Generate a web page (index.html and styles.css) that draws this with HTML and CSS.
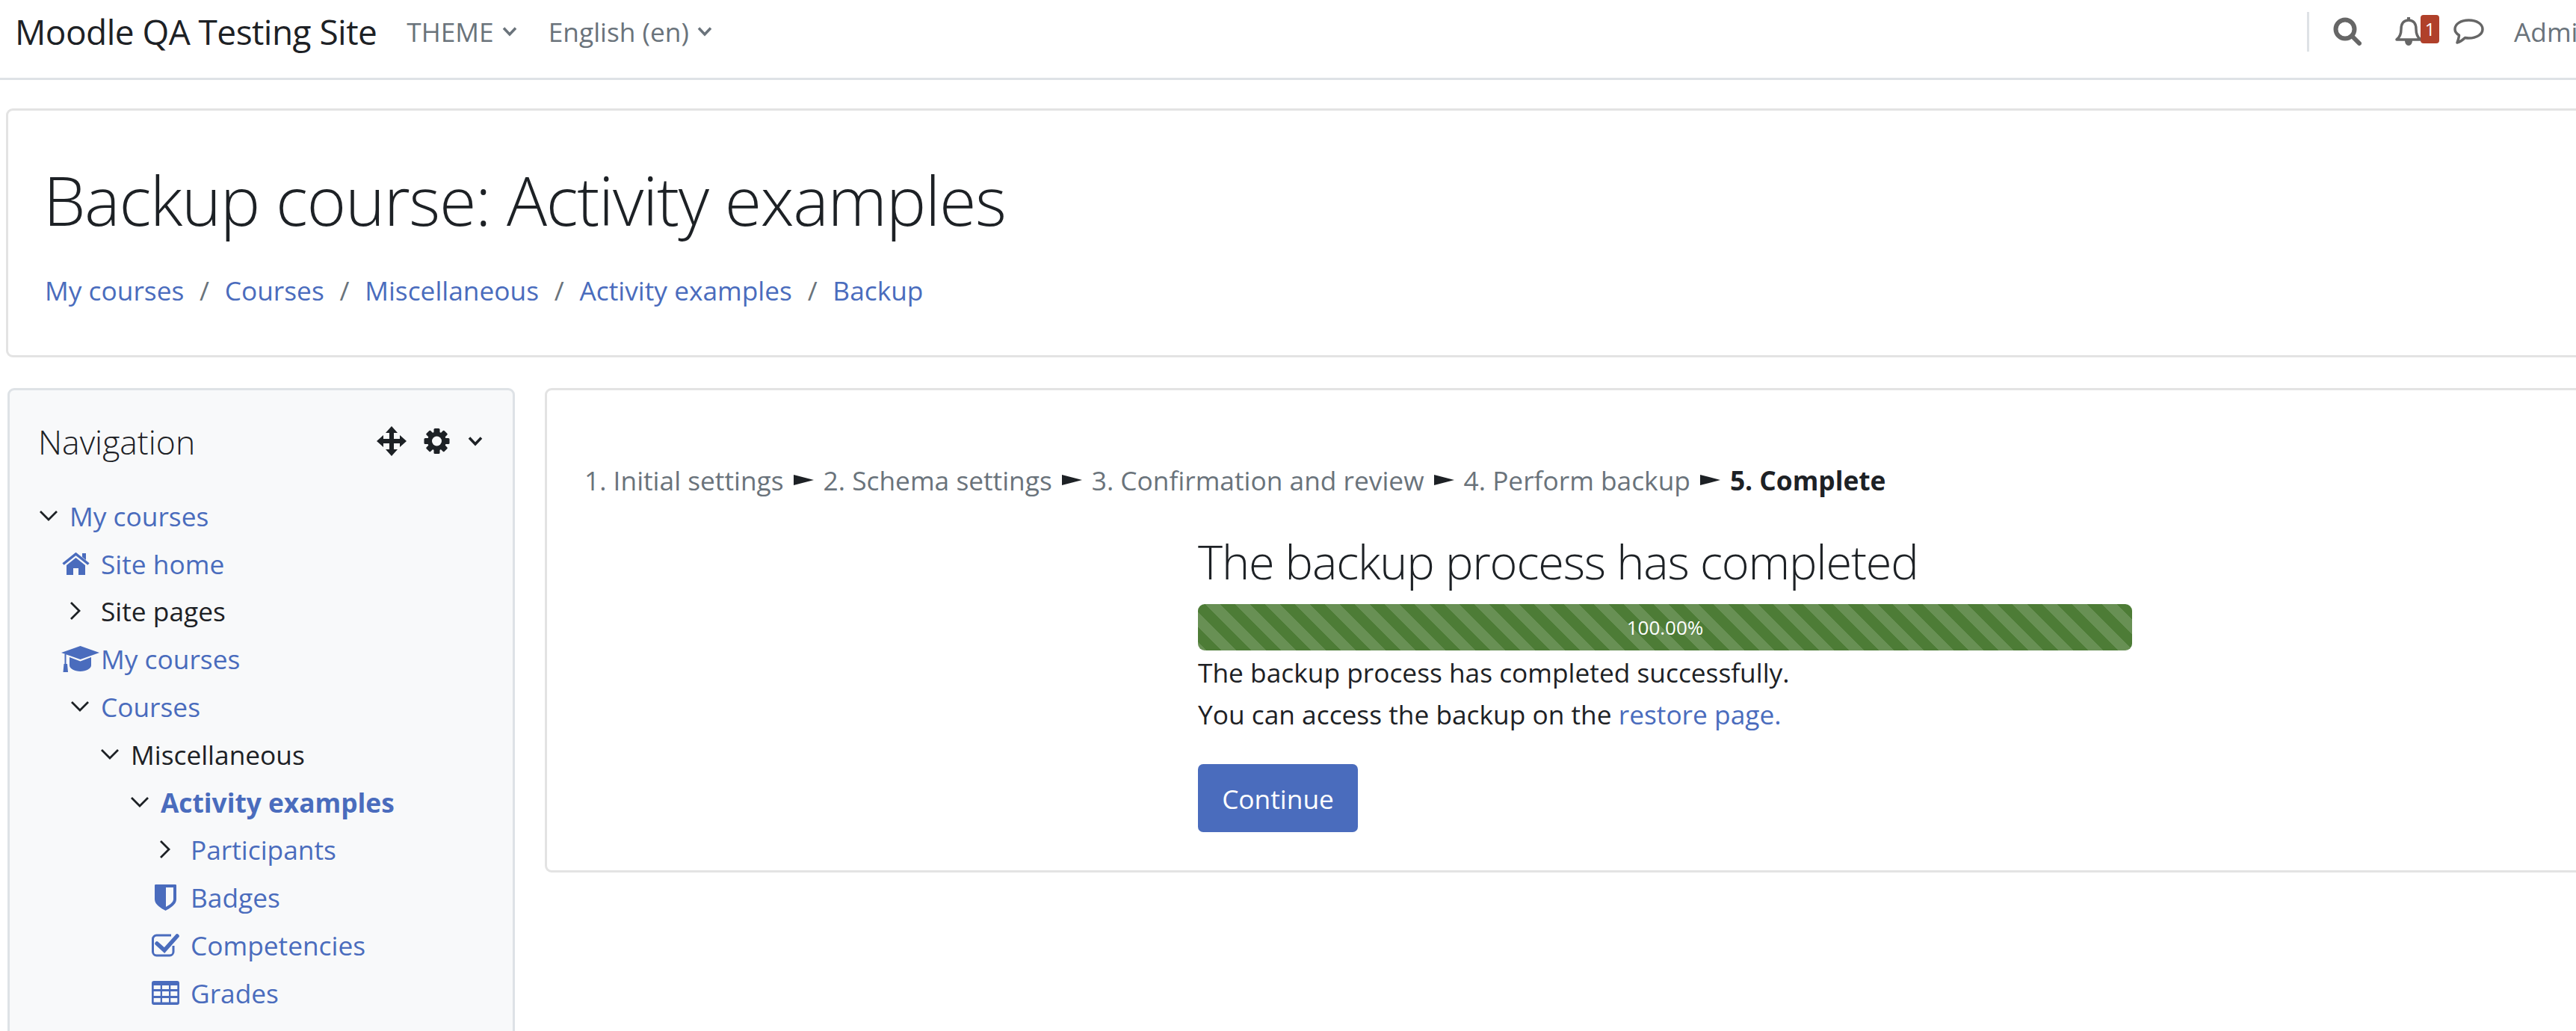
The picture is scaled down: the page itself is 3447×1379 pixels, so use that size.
FILE: index.html
```html
<!DOCTYPE html>
<html lang="en">
<head>
<meta charset="utf-8">
<title>Backup course: Activity examples</title>
<link rel="stylesheet" href="styles.css">
</head>
<body>
<header class="navbar">
  <a class="brand">Moodle QA Testing Site</a>
  <a class="menu">THEME<svg class="caret" viewBox="0 0 20 14"><path d="M2 2.500l8 8.500 8-8.500"/></svg></a>
  <a class="menu">English ‎(en)‎<svg class="caret" viewBox="0 0 20 14"><path d="M2 2.500l8 8.500 8-8.500"/></svg></a>
  <div class="nav-right">
    <span class="divider"></span>
    <svg class="ic-search" viewBox="0 0 38 38"><circle cx="16" cy="16" r="12.500"/><path d="m25 25 10 10"/></svg>
    <span class="bell-wrap">
      <svg class="ic-bell" viewBox="0 0 36 40"><path class="line" d="M2 31c4-3 6-7 6-14C8 9 12 5 18 5s10 4 10 12c0 7 2 11 6 14z"/><path class="solid" d="M16 1h4v5h-4zM13 32h10c0 4-2 7-5 7s-5-3-5-7z"/></svg>
      <span class="badge">1</span>
    </span>
    <svg class="ic-chat" viewBox="0 0 41 36"><path d="M20.500 3C10 3 2 8 2 15c0 3.500 2 6 5.500 8 0 3-1 6-2.500 10 4-1 8-4 10.500-6.500 1.500.3 3.500.5 5 .5C31 27 39 22 39 15S31 3 20.500 3z"/></svg>
    <span class="user">Admin User</span>
  </div>
</header>

<section class="page-header">
  <h1>Backup course: Activity examples</h1>
  <nav class="crumbs">
    <a>My courses</a><i>/</i><a>Courses</a><i>/</i><a>Miscellaneous</a><i>/</i><a>Activity examples</a><i>/</i><a>Backup</a>
  </nav>
</section>

<div class="columns">
  <aside class="block">
    <div class="block-head">
      <h2>Navigation</h2>
      <svg class="ic-move" viewBox="0 0 40 40"><path d="M20 0l8 9h-5v8h8v-5l9 8-9 8v-5h-8v8h5l-8 9-8-9h5v-8H9v5l-9-8 9-8v5h8V9h-5z"/></svg>
      <svg class="ic-gear" viewBox="0 0 35 34">
        <g class="teeth">
          <rect x="13.500" y="0" width="8" height="34" rx="1.500"/>
          <rect x="13.500" y="0" width="8" height="34" rx="1.500" transform="rotate(45 17.500 17)"/>
          <rect x="13.500" y="0" width="8" height="34" rx="1.500" transform="rotate(90 17.500 17)"/>
          <rect x="13.500" y="0" width="8" height="34" rx="1.500" transform="rotate(135 17.500 17)"/>
          <circle cx="17.500" cy="17" r="12.500"/>
        </g>
        <circle class="hole" cx="17.500" cy="17" r="6.500"/>
      </svg>
      <svg class="caret dark" viewBox="0 0 20 14"><path d="M2 2.500l8 8.500 8-8.500"/></svg>
    </div>
    <ul class="tree">
      <li class="lv0"><span class="slot"><svg class="tw" viewBox="0 0 24 24"><path d="M1 6l11 11L23 6"/></svg></span><a>My courses</a></li>
      <li class="lv1"><span class="slot"><svg class="fi home" viewBox="0 0 37 30"><path class="roof" d="M1.500 15.500 18.500 2l17 13.500"/><path d="M27 1h5v9l-5-4zM18.500 7 31 17v13h-9v-9h-7v9H6V17z"/></svg></span><a>Site home</a></li>
      <li class="lv1"><span class="slot"><svg class="tw right" viewBox="0 0 24 24"><path d="M1 1l11 11L1 23"/></svg></span><span>Site pages</span></li>
      <li class="lv1"><span class="slot"><svg class="fi cap" viewBox="0 0 51 35"><path d="M25.500 0 51 9l-25.500 9L0 9zM11 15l14.500 5.500L40 15v11c0 4-6.500 8-14.500 8S11 30 11 26zM4.500 11h2v13h1.500l1 11H2.500l1-11h1z"/></svg></span><a>My courses</a></li>
      <li class="lv1"><span class="slot"><svg class="tw" viewBox="0 0 24 24"><path d="M1 6l11 11L23 6"/></svg></span><a>Courses</a></li>
      <li class="lv2"><span class="slot"><svg class="tw" viewBox="0 0 24 24"><path d="M1 6l11 11L23 6"/></svg></span><span>Miscellaneous</span></li>
      <li class="lv3"><span class="slot"><svg class="tw" viewBox="0 0 24 24"><path d="M1 6l11 11L23 6"/></svg></span><a class="strong">Activity examples</a></li>
      <li class="lv4"><span class="slot"><svg class="tw right" viewBox="0 0 24 24"><path d="M1 1l11 11L1 23"/></svg></span><a>Participants</a></li>
      <li class="lv4"><span class="slot"><svg class="fi shield" viewBox="0 0 29 35"><path fill-rule="evenodd" d="M1.500 0h26c1 0 1.500.5 1.500 1.500V20c0 7-9 12-14.500 15C9 32 0 27 0 20V1.500C0 .5.500 0 1.500 0zM15 4v26c4-2.500 10-5.500 10-10.500V4z"/></svg></span><a>Badges</a></li>
      <li class="lv4"><span class="slot"><svg class="fi check" viewBox="0 0 37 32"><path class="ln" d="M29 17v8a5 5 0 0 1-5 5H6.500a5 5 0 0 1-5-5V8a5 5 0 0 1 5-5H26"/><path class="ln thick" d="M7 14l10 9L34 4"/></svg></span><a>Competencies</a></li>
      <li class="lv4"><span class="slot"><svg class="fi grid" viewBox="0 0 37 32"><path fill-rule="evenodd" d="M3 0h31a3 3 0 0 1 3 3v26a3 3 0 0 1-3 3H3a3 3 0 0 1-3-3V3a3 3 0 0 1 3-3zM2.700 6v5h9V6zM14 6v5h9V6zM25.300 6v5h9V6zM2.700 14v6h9v-6zM14 14v6h9v-6zM25.300 14v6h9v-6zM2.700 23v5.500h9V23zM14 23v5.500h9V23zM25.300 23v5.500h9V23z"/></svg></span><a>Grades</a></li>
      <li class="lv4"><span class="slot"><svg class="tw" viewBox="0 0 24 24"><path d="M1 6l11 11L23 6"/></svg></span><a>General</a></li>
    </ul>
  </aside>

  <main class="content">
    <div class="steps"><span>1. Initial settings</span><svg class="sep" viewBox="0 0 27 14"><path d="M0 0l27 7L0 14z"/></svg><span>2. Schema settings</span><svg class="sep" viewBox="0 0 27 14"><path d="M0 0l27 7L0 14z"/></svg><span>3. Confirmation and review</span><svg class="sep" viewBox="0 0 27 14"><path d="M0 0l27 7L0 14z"/></svg><span>4. Perform backup</span><svg class="sep" viewBox="0 0 27 14"><path d="M0 0l27 7L0 14z"/></svg><b class="cur">5. Complete</b></div>
    <div class="result">
      <h3>The backup process has completed</h3>
      <div class="progress">100.00%</div>
      <p>The backup process has completed successfully.</p>
      <p>You can access the backup on the <a>restore page.</a></p>
      <button class="btn">Continue</button>
    </div>
  </main>
</div>
</body>
</html>
```

FILE: styles.css
```css
* { box-sizing: border-box; }
html, body { height: 100%; overflow: hidden; }
body {
  margin: 0;
  background: #fff;
  color: #1d2125;
  font-family: "Open Sans", "Noto Sans", sans-serif;
  font-size: 35.3px;
}
a { color: #4a6cbd; }

.navbar {
  display: flex;
  align-items: center;
  height: 107px;
  border-bottom: 3px solid #dee2e6;
  padding: 0 0 20px 20px;
  color: #6a737b;
}
.brand { color: #1d2125; font-size: 46px; margin-right: 40px; letter-spacing: -0.55px; }
.menu { display: flex; align-items: center; color: #6a737b; margin-right: 42px; }
.caret { width: 20px; height: 14px; margin-left: 11px; fill: none; stroke: #6a737b; stroke-width: 3.5; }
.caret.dark { stroke: #1d2125; margin: 0 4px 0 0; }

.nav-right { display: flex; flex: none; align-items: center; margin-left: auto; width: 360px; }
.divider { flex: none; width: 3px; height: 53px; background: #dee2e6; margin-right: 32px; }
.ic-search { flex: none; width: 38px; height: 38px; fill: none; stroke: #666; stroke-width: 6; stroke-linecap: round; margin-right: 45px; }
.bell-wrap { position: relative; display: flex; flex: none; width: 78px; }
.ic-bell { width: 36px; height: 40px; }
.ic-bell .line { fill: none; stroke: #666; stroke-width: 3.5; stroke-linejoin: round; }
.ic-bell .solid { fill: #666; }
.badge {
  position: absolute;
  left: 34px;
  top: -2px;
  width: 25px;
  height: 38px;
  border-radius: 4px;
  background: #b0402a;
  color: #fff;
  font-size: 24px;
  line-height: 38px;
  text-align: center;
}
.ic-chat { flex: none; width: 41px; height: 36px; fill: none; stroke: #666; stroke-width: 3.5; stroke-linejoin: round; margin-right: 40px; }
.user { white-space: nowrap; color: #6a737b; }

.page-header {
  margin: 38px -20px 0 8px;
  height: 333px;
  border: 3px solid #e3e3e3;
  border-radius: 9px;
  padding: 54px 47px 0;
}
h1 { margin: 0; font-weight: 300; font-size: 90px; line-height: 130px; letter-spacing: -1.35px; }
.crumbs { display: flex; margin: 32px 0 0 2px; line-height: 48px; }
.crumbs i { font-style: normal; color: #6a737b; margin: 0 20.75px; }

.columns { display: flex; align-items: flex-start; gap: 40px; margin: 41px 0 0 10px; }
.block {
  flex: 0 0 679px;
  height: 1000px;
  background: #f8f9fa;
  border: 3px solid #dee2e6;
  border-radius: 9px;
  padding: 35px 36px 0 38px;
}
.block-head { display: flex; align-items: center; height: 66px; }
h2 { flex: 1; margin: 0; font-weight: 300; font-size: 44.500px; }
.ic-move { width: 40px; height: 40px; fill: #1d2125; margin-right: 23px; }
.ic-gear { width: 35px; height: 34px; fill: #1d2125; margin-right: 24px; }
.ic-gear .hole { fill: #f8f9fa; }

.tree { list-style: none; margin: 35px 0 0; padding: 0; }
.tree li { display: flex; align-items: center; height: 63.8px; white-space: nowrap; }
.lv0 { padding-left: 2px; }
.lv1 { padding-left: 44px; }
.lv2 { padding-left: 84px; }
.lv3 { padding-left: 124px; }
.lv4 { padding-left: 164px; }
.slot { display: flex; flex: 0 0 40px; align-items: center; }
.tw { flex: none; width: 24px; height: 24px; fill: none; stroke: #1d2125; stroke-width: 2.8; }
.tw.right { margin-left: -1px; }
.fi { flex: none; fill: #4a6cbd; }
.home { width: 37px; height: 30px; margin-left: -12px; }
.home .roof { fill: none; stroke: #4a6cbd; stroke-width: 3.5; }
.cap { width: 51px; height: 35px; margin-left: -13px; }
.shield { width: 29px; height: 35px; margin-left: -8px; }
.check { width: 37px; height: 32px; margin-left: -12px; }
.check .ln { fill: none; stroke: #4a6cbd; stroke-width: 3; }
.check .thick { stroke-width: 5.500; stroke-linecap: round; }
.grid { width: 37px; height: 32px; margin-left: -12px; }
.strong { font-weight: 700; }

.content {
  flex: 0 0 3000px;
  height: 648px;
  border: 3px solid #e3e3e3;
  border-radius: 9px;
  padding: 96px 0 0 50px;
}
.steps { display: flex; align-items: center; color: #6a737b; line-height: 48px; }
.sep { flex: none; width: 27px; height: 14px; margin: 0 13px; fill: #1d2125; }
.cur { color: #1d2125; }
.result { width: 1250px; margin-left: 821px; padding-top: 46px; }
h3 { margin: 0; font-weight: 300; font-size: 63px; line-height: 78px; letter-spacing: -1.15px; }
.progress {
  height: 62px;
  margin-top: 18px;
  border-radius: 9px;
  background-color: #4d7c36;
  background-image: linear-gradient(45deg, rgba(255,255,255,.15) 25%, transparent 25%, transparent 50%, rgba(255,255,255,.15) 50%, rgba(255,255,255,.15) 75%, transparent 75%, transparent);
  background-size: 40px 40px;
  background-position: 10px 0;
  color: #fff;
  font-size: 26px;
  line-height: 62px;
  text-align: center;
}
p { margin: 0; line-height: 56px; }
.progress + p { margin-top: 1px; }
.btn {
  display: block;
  width: 214px;
  height: 91px;
  margin-top: 39px;
  border: 0;
  border-radius: 7px;
  background: #4a6cbd;
  color: #fff;
  font: inherit;
}
```
